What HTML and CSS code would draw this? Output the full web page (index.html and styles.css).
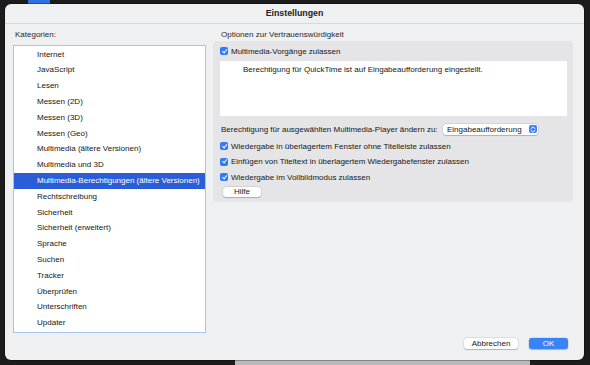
FILE: index.html
```html
<!DOCTYPE html>
<html lang="de">
<head>
    <meta charset="UTF-8">
    <title>Einstellungen</title>
    <link rel="stylesheet" href="styles.css">
</head>
<body>
    <!-- desktop bits behind the sheet -->
    <div class="desk-icon"></div>
    <div class="desk-window"></div>

    <div class="dialog">
        <div class="titlebar">Einstellungen</div>

        <div class="content">
            <div class="left-col">
                <div class="col-label">Kategorien:</div>
                <ul class="category-list">
                    <li>Internet</li>
                    <li>JavaScript</li>
                    <li>Lesen</li>
                    <li>Messen (2D)</li>
                    <li>Messen (3D)</li>
                    <li>Messen (Geo)</li>
                    <li>Multimedia (ältere Versionen)</li>
                    <li>Multimedia und 3D</li>
                    <li class="selected">Multimedia-Berechtigungen (ältere Versionen)</li>
                    <li>Rechtschreibung</li>
                    <li>Sicherheit</li>
                    <li>Sicherheit (erweitert)</li>
                    <li>Sprache</li>
                    <li>Suchen</li>
                    <li>Tracker</li>
                    <li>Überprüfen</li>
                    <li>Unterschriften</li>
                    <li>Updater</li>
                </ul>
            </div>

            <div class="right-col">
                <div class="col-label pad">Optionen zur Vertrauenswürdigkeit</div>
                <div class="group">
                    <label class="check-row"><span class="checkbox"></span>Multimedia-Vorgänge zulassen</label>
                    <div class="info-box">Berechtigung für QuickTime ist auf Eingabeaufforderung eingestellt.</div>

                    <div class="select-row">
                        <span class="select-label">Berechtigung für ausgewählten Multimedia-Player ändern zu:</span>
                        <div class="select">
                            <span>Eingabeaufforderung</span>
                            <span class="stepper">
                                <svg width="6" height="7" viewBox="0 0 6 7"><path d="M1 2.6 L3 0.8 L5 2.6 M1 4.4 L3 6.2 L5 4.4" fill="none" stroke="#fff" stroke-width="1" stroke-linecap="round" stroke-linejoin="round"/></svg>
                            </span>
                        </div>
                    </div>

                    <div class="checks">
                        <label class="check-row"><span class="checkbox"></span>Wiedergabe in überlagertem Fenster ohne Titelleiste zulassen</label>
                        <label class="check-row"><span class="checkbox"></span>Einfügen von Titeltext in überlagertem Wiedergabefenster zulassen</label>
                        <label class="check-row"><span class="checkbox"></span>Wiedergabe im Vollbildmodus zulassen</label>
                    </div>

                    <button class="btn help">Hilfe</button>
                </div>
            </div>
        </div>

        <div class="footer">
            <button class="btn cancel">Abbrechen</button>
            <button class="btn ok">OK</button>
        </div>
    </div>
</body>
</html>
```

FILE: styles.css
```css
body {
    margin: 0;
    padding: 4px 6px 0 5px;
    background: #1c1c1c;
    font-family: "Liberation Sans", Arial, sans-serif;
    font-size: 8px;
    color: #161616;
    position: relative;
    height: 365px;
    box-sizing: border-box;
    overflow: hidden;
}
.desk-icon {
    position: absolute;
    left: 28px;
    top: 0;
    width: 22px;
    height: 6px;
    background: #2f6fdf;
}
.desk-window {
    position: absolute;
    left: 235px;
    bottom: 0;
    width: 295px;
    height: 8px;
    background: #b9b9bb;
}
.dialog {
    position: relative;
    height: 356px;
    background: #eff0f2;
    border-radius: 6px;
    display: flex;
    flex-direction: column;
    box-shadow: 0 0 0 0.5px rgba(0, 0, 0, 0.6);
}
.titlebar {
    height: 19px;
    line-height: 19px;
    text-align: center;
    font-weight: bold;
    font-size: 8.8px;
    color: #222;
    border-bottom: 1px solid #d9d9db;
}
.content {
    display: flex;
    gap: 7px;
    padding: 6px 11px 0 8px;
}
.col-label {
    line-height: 10px;
    height: 10px;
    margin-bottom: 5px;
    padding-left: 2px;
    color: #2a2a2a;
}
.col-label.pad {
    padding-left: 8px;
    margin-bottom: 1px;
}
.left-col {
    width: 193px;
}
.category-list {
    list-style: none;
    margin: 0;
    padding: 0.6px 0 0;
    height: 288px;
    box-sizing: border-box;
    background: #fff;
    border: 1px solid #a9c3ef;
}
.category-list li {
    height: 15.8px;
    line-height: 15.8px;
    padding-left: 23px;
    white-space: nowrap;
}
.category-list li.selected {
    background: #2c5dd8;
    color: #fff;
}
.right-col {
    width: 360px;
}
.group {
    background: #e5e5e7;
    border-radius: 4px;
    padding: 4px 6px 5px 7px;
}
.check-row {
    display: flex;
    align-items: center;
    height: 12px;
    white-space: nowrap;
}
.checkbox {
    width: 8px;
    height: 8px;
    border-radius: 2px;
    background: #2f7bf5;
    margin-right: 3px;
    position: relative;
    flex: none;
}
.checkbox::after {
    content: "";
    position: absolute;
    left: 2.6px;
    top: 0.8px;
    width: 2px;
    height: 4.4px;
    border-right: 1.2px solid #fff;
    border-bottom: 1.2px solid #fff;
    transform: rotate(40deg);
}
.info-box {
    background: #fff;
    height: 55px;
    box-sizing: border-box;
    margin-top: 4px;
    padding: 4px 0 0 23px;
    line-height: 10px;
}
.select-row {
    display: flex;
    align-items: center;
    margin-top: 7px;
    height: 12px;
}
.select-label {
    width: 222px;
    flex: none;
    padding-left: 1px;
    white-space: nowrap;
}
.select {
    width: 95px;
    height: 11px;
    box-sizing: border-box;
    background: #fff;
    border-radius: 3px;
    box-shadow: 0 0 0 0.5px rgba(0, 0, 0, 0.12), 0 0.5px 1px rgba(0, 0, 0, 0.18);
    display: flex;
    align-items: center;
    justify-content: space-between;
    padding: 0 1.5px 0 4px;
}
.stepper {
    width: 8px;
    height: 8px;
    border-radius: 2px;
    background: #3b7ff4;
    display: flex;
    align-items: center;
    justify-content: center;
}
.checks {
    margin-top: 5px;
    display: flex;
    flex-direction: column;
    gap: 3.5px;
}
.btn {
    font-family: inherit;
    font-size: 8px;
    border: none;
    border-radius: 3px;
    padding: 0;
    background: #fff;
    color: #161616;
    box-shadow: 0 0 0 0.5px rgba(0, 0, 0, 0.12), 0 0.5px 1px rgba(0, 0, 0, 0.2);
    height: 11px;
    line-height: 11px;
}
.help {
    display: block;
    width: 38px;
    height: 10px;
    line-height: 10px;
    margin: 4px 0 0 3px;
}
.footer {
    display: flex;
    justify-content: flex-end;
    gap: 11px;
    padding: 5px 16px 0 0;
}
.cancel {
    width: 54px;
}
.ok {
    width: 39px;
    background: #3a83f7;
    color: #fff;
}
```
